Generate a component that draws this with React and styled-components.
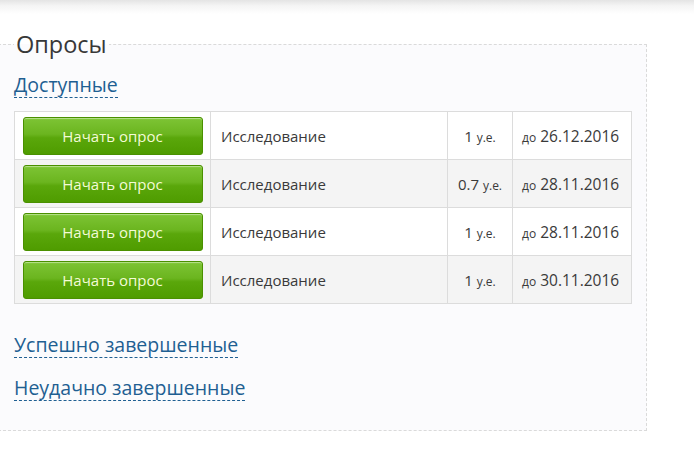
import React from "react";
import styled, { createGlobalStyle } from "styled-components";

const GlobalStyle = createGlobalStyle`
  html, body {
    margin: 0;
    padding: 0;
    background: #fff;
    font-family: "Open Sans", "Liberation Sans", sans-serif;
  }
`;

const surveys = [
  { title: "Исследование", price: "1", date: "26.12.2016" },
  { title: "Исследование", price: "0.7", date: "28.11.2016" },
  { title: "Исследование", price: "1", date: "28.11.2016" },
  { title: "Исследование", price: "1", date: "30.11.2016" },
];

function App() {
  return (
    <>
      <GlobalStyle />
      <TopShade />
      <Wrapper>
        <Legend>Опросы</Legend>
        <Section $top={16}>
          <Toggle href="#">Доступные</Toggle>
        </Section>
        <Table>
          <tbody>
            {surveys.map((s, i) => (
              <Row key={i} $odd={i % 2 === 1}>
                <ButtonCell>
                  <StartButton type="button">Начать опрос</StartButton>
                </ButtonCell>
                <TitleCell>{s.title}</TitleCell>
                <PriceCell>
                  {s.price} <small>у.е.</small>
                </PriceCell>
                <DateCell>
                  <small>до</small> {s.date}
                </DateCell>
              </Row>
            ))}
          </tbody>
        </Table>
        <Section $top={29}>
          <Toggle href="#">Успешно завершенные</Toggle>
        </Section>
        <Section $top={18}>
          <Toggle href="#">Неудачно завершенные</Toggle>
        </Section>
      </Wrapper>
    </>
  );
}

export default App;

const TopShade = styled.div`
  height: 14px;
  background: linear-gradient(#e4e4e4, #f4f4f4 40%, #fff);
`;

const Wrapper = styled.fieldset`
  box-sizing: border-box;
  width: 649px;
  margin: 17px 0 0 -2px;
  padding: 0 14px 29px 15px;
  border: 1px dashed #dadada;
  background: #fbfbfd;
`;

const Legend = styled.legend`
  padding: 0 2px;
  margin-left: 0;
  font-size: 23.5px;
  line-height: 26px;
  color: #383838;
`;

const Section = styled.div`
  margin-top: ${(p) => `${p.$top}px`};
`;

const Toggle = styled.a`
  display: inline-block;
  font-size: 19.5px;
  line-height: 24px;
  color: #1f5f92;
  text-decoration: none;
  border-bottom: 1px dashed #1f5f92;
`;

const Table = styled.table`
  margin-top: 13px;
  width: 618px;
  border-collapse: collapse;
  border: 1px solid #dcdcdc;
  font-size: 15px;
  color: #3a3a3a;

  td {
    border: 1px solid #dcdcdc;
    height: 48px;
    padding: 0;
    box-sizing: border-box;
  }

  small {
    font-size: 12px;
  }
`;

const Row = styled.tr`
  background: ${(p) => (p.$odd ? "#f4f4f4" : "#fff")};
`;

const ButtonCell = styled.td`
  width: 196px;
  text-align: center;
`;

const StartButton = styled.button`
  display: block;
  margin: 1px auto 0;
  width: 180px;
  height: 38px;
  border: 1px solid #4a9000;
  border-radius: 3px;
  background: linear-gradient(#8ed14a 0, #7bc232 6%, #6bb51f 45%, #5aa70b 55%, #4f9c00 100%);
  box-shadow: inset 0 1px 0 rgba(255, 255, 255, 0.35);
  color: #f4fbd6;
  font-family: "Open Sans", "Liberation Sans", sans-serif;
  font-size: 15px;
  cursor: pointer;
`;

const TitleCell = styled.td`
  padding-left: 10px !important;
`;

const PriceCell = styled.td`
  width: 65px;
  text-align: center;
  white-space: nowrap;
`;

const DateCell = styled.td`
  width: 119px;
  padding-left: 9px !important;
  font-size: 15.5px;
  white-space: nowrap;
`;
